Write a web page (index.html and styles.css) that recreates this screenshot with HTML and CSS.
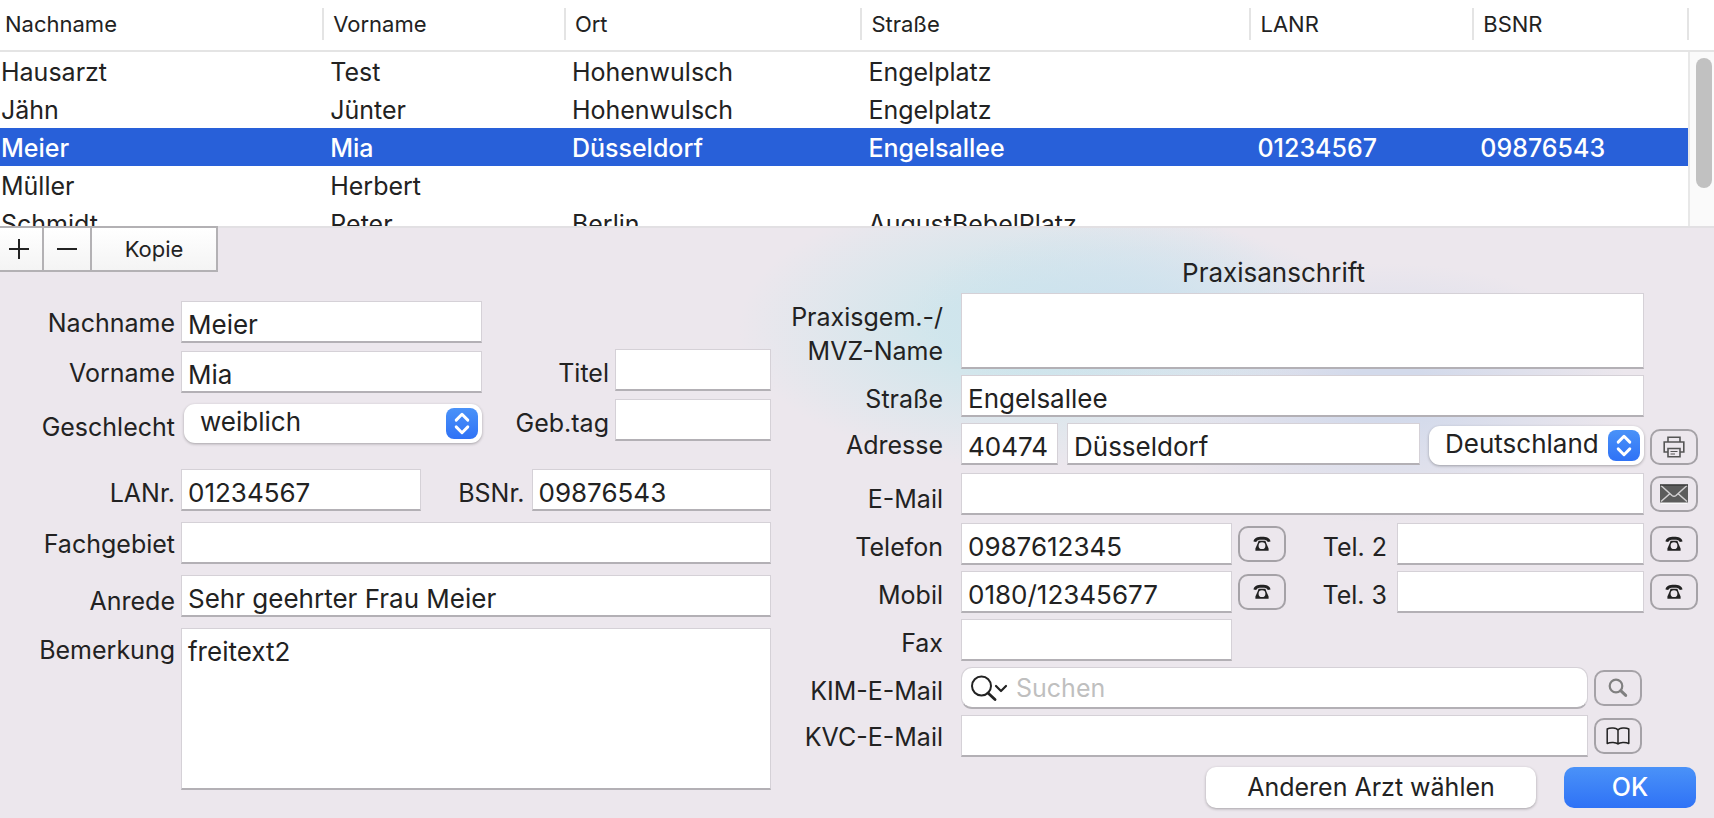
FILE: index.html
```html
<!DOCTYPE html>
<html lang="de">
<head>
<meta charset="utf-8">
<meta name="viewport" content="width=device-width, initial-scale=1">
<title>Ärzte</title>
<link rel="stylesheet" href="styles.css">
</head>
<body>
<svg class="sprite" aria-hidden="true">
  <symbol id="i-updown" viewBox="0 0 32 32"><path d="M10 12.500l6-6 6 6M10 19.500l6 6 6-6" fill="none" stroke="#fff" stroke-width="3" stroke-linecap="round" stroke-linejoin="round"/></symbol>
  <symbol id="i-phone" viewBox="0 0 18 16"><path d="M.5 5.400C1 2.200 4.400.8 9 .8s8 1.400 8.500 4.600l-2.800.6C14.300 4.300 12.600 3.700 9 3.700s-5.300.6-5.700 2.300z" fill="#222"/><path fill-rule="evenodd" d="M5.600 4.800h6.800l1 2.600 2.200 5v2.400H2.400v-2.400l2.200-5zM9 6.300a3.400 3.400 0 1 0 0 6.800 3.400 3.400 0 0 0 0-6.800z" fill="#222"/></symbol>
  <symbol id="i-print" viewBox="0 0 22 22"><g fill="none" stroke="#555" stroke-width="1.600"><path d="M5 6V1.200h12V6"/><path d="M5 16H1.200V6h19.600v10H17"/><path d="M5 12.500h12v8.300H5z"/><path d="M7.500 15.500h7M7.500 18h4.500" stroke-width="1.100"/></g></symbol>
  <symbol id="i-mail" viewBox="0 0 28 20"><path d="M1 18.500h26v1.200H1z" fill="#fff"/><path d="M0 .5h28v18H0z" fill="#5c5c5c"/><path d="M1 1.500l11 10q2 1.600 4 0l11-10M1 17.500l8.500-7.500M27 17.500l-8.500-7.500" fill="none" stroke="#d2d0d2" stroke-width="1.500"/><path d="M0 1h28" stroke="#333" stroke-width="1.200"/></symbol>
  <symbol id="i-find" viewBox="0 0 20 20"><circle cx="8" cy="8" r="6.300" fill="none" stroke="#808080" stroke-width="2.200"/><path d="M12.700 12.700l5 4.700" stroke="#808080" stroke-width="3" stroke-linecap="round"/></symbol>
  <symbol id="i-book" viewBox="0 0 24 18"><path d="M12 3C10.500.5 4 .3 1.200 2v14.500c3-1.500 9-1.300 10.800.5 1.800-1.800 7.800-2 10.800-.5V2C20 .3 13.500.5 12 3zM12 3v14" fill="none" stroke="#222" stroke-width="1.500" stroke-linejoin="round"/></symbol>
  <symbol id="i-search" viewBox="0 0 38 26"><g fill="none" stroke="#222" stroke-width="2" stroke-linecap="round" stroke-linejoin="round"><circle cx="11.500" cy="11" r="9.500"/><path d="M18 18l7 6.500" stroke-width="2.800"/><path d="M26 11l5 5 5-5" stroke-width="2.200"/></g></symbol>
</svg>

<section class="list">
  <table class="doctors">
    <colgroup><col class="c-last"><col class="c-first"><col class="c-town"><col class="c-street"><col class="c-lanr"><col class="c-bsnr"><col></colgroup>
    <thead>
      <tr><th><span>Nachname</span></th><th><span>Vorname</span></th><th><span>Ort</span></th><th><span>Straße</span></th><th><span>LANR</span></th><th><span>BSNR</span></th><th><span></span></th></tr>
    </thead>
    <tbody>
      <tr><td>Hausarzt</td><td>Test</td><td>Hohenwulsch</td><td>Engelplatz</td><td></td><td></td><td></td></tr>
      <tr><td>Jähn</td><td>Jünter</td><td>Hohenwulsch</td><td>Engelplatz</td><td></td><td></td><td></td></tr>
      <tr class="selected"><td>Meier</td><td>Mia</td><td>Düsseldorf</td><td>Engelsallee</td><td>01234567</td><td>09876543</td><td></td></tr>
      <tr><td>Müller</td><td>Herbert</td><td></td><td></td><td></td><td></td><td></td></tr>
      <tr><td>Schmidt</td><td>Peter</td><td>Berlin</td><td>AugustBebelPlatz</td><td></td><td></td><td></td></tr>
    </tbody>
  </table>
  <div class="scroll-track"><div class="scroll-thumb"></div></div>
</section>

<form class="editor">
  <div class="left">
    <div class="toolbar">
      <button type="button" class="tool tool-add" aria-label="Hinzufügen"><svg width="22" height="22" viewBox="0 0 22 22"><path d="M11 1v20M1 11h20" stroke="#222" stroke-width="2"/></svg></button>
      <button type="button" class="tool tool-remove" aria-label="Entfernen"><svg width="22" height="22" viewBox="0 0 22 22"><path d="M1 11h20" stroke="#222" stroke-width="2"/></svg></button>
      <button type="button" class="tool tool-copy">Kopie</button>
    </div>
    <div class="person">
      <div class="stack names">
        <div class="row"><label class="label high" for="nachname">Nachname</label><input class="field" id="nachname" value="Meier"></div>
        <div class="row"><label class="label high" for="vorname">Vorname</label><input class="field" id="vorname" value="Mia"></div>
        <div class="row"><label class="label low" for="geschlecht">Geschlecht</label>
          <div class="popup"><select id="geschlecht"><option>weiblich</option><option>männlich</option></select><svg class="updown"><use href="#i-updown"/></svg></div></div>
      </div>
      <div class="stack extras">
        <div class="row"><label class="label" for="titel">Titel</label><input class="field" id="titel"></div>
        <div class="row"><label class="label" for="gebtag">Geb.tag</label><input class="field" id="gebtag"></div>
      </div>
    </div>
    <div class="details">
      <div class="row numbers"><label class="label" for="lanr">LANr.</label><input class="field" id="lanr" value="01234567"><label class="label" for="bsnr">BSNr.</label><input class="field" id="bsnr" value="09876543"></div>
      <div class="row"><label class="label high" for="fach">Fachgebiet</label><input class="field" id="fach"></div>
      <div class="row"><label class="label low" for="anrede">Anrede</label><input class="field" id="anrede" value="Sehr geehrter Frau Meier"></div>
      <div class="row"><label class="label high" for="bemerkung">Bemerkung</label><textarea class="field remark" id="bemerkung">freitext2</textarea></div>
    </div>
  </div>

  <div class="right">
    <h2 class="heading">Praxisanschrift</h2>
    <div class="group">
      <div class="line"><label class="label two-line" for="praxis">Praxisgem.-/<br>MVZ-Name</label><textarea class="field practice" id="praxis"></textarea></div>
      <div class="line"><label class="label" for="strasse">Straße</label><input class="field" id="strasse" value="Engelsallee"></div>
      <div class="line"><label class="label high" for="plz">Adresse</label>
        <div class="address"><input class="field" id="plz" value="40474"><input class="field" aria-label="Ort" value="Düsseldorf">
          <div class="popup"><select aria-label="Land"><option>Deutschland</option></select><svg class="updown"><use href="#i-updown"/></svg></div></div>
        <button type="button" class="icon-btn drop" aria-label="Drucken"><svg width="22" height="22"><use href="#i-print"/></svg></button></div>
    </div>
    <div class="group">
      <div class="line"><label class="label low" for="email">E-Mail</label><input class="field" id="email"><button type="button" class="icon-btn" aria-label="E-Mail senden"><svg width="28" height="20"><use href="#i-mail"/></svg></button></div>
    </div>
    <div class="group">
      <div class="line phones"><label class="label" for="tel">Telefon</label><input class="field" id="tel" value="0987612345"><button type="button" class="icon-btn" aria-label="Telefon anrufen"><svg width="18" height="16"><use href="#i-phone"/></svg></button>
        <label class="label" for="tel2">Tel. 2</label><input class="field" id="tel2"><button type="button" class="icon-btn" aria-label="Tel. 2 anrufen"><svg width="18" height="16"><use href="#i-phone"/></svg></button></div>
      <div class="line phones"><label class="label" for="mobil">Mobil</label><input class="field" id="mobil" value="0180/12345677"><button type="button" class="icon-btn" aria-label="Mobil anrufen"><svg width="18" height="16"><use href="#i-phone"/></svg></button>
        <label class="label" for="tel3">Tel. 3</label><input class="field" id="tel3"><button type="button" class="icon-btn" aria-label="Tel. 3 anrufen"><svg width="18" height="16"><use href="#i-phone"/></svg></button></div>
      <div class="line phones"><label class="label" for="fax">Fax</label><input class="field" id="fax"></div>
      <div class="line short"><label class="label" for="kim">KIM-E-Mail</label>
        <div class="search"><svg width="38" height="26"><use href="#i-search"/></svg><input id="kim" placeholder="Suchen"></div>
        <button type="button" class="icon-btn" aria-label="KIM suchen"><svg width="20" height="20"><use href="#i-find"/></svg></button></div>
      <div class="line short"><label class="label high" for="kvc">KVC-E-Mail</label><input class="field" id="kvc"><button type="button" class="icon-btn" aria-label="Adressbuch"><svg width="24" height="18"><use href="#i-book"/></svg></button></div>
    </div>
    <div class="actions"><button type="button" class="action">Anderen Arzt wählen</button><button type="button" class="action primary">OK</button></div>
  </div>
</form>
</body>
</html>
```
FILE: styles.css
```css
* { box-sizing: border-box; }

body {
  margin: 0;
  min-height: 100vh;
  display: flex;
  flex-direction: column;
  font-family: Inter, "Liberation Sans", sans-serif;
  font-size: 25px;
  line-height: 34px;
  color: #222;
  background: #ece7ed;
}

input, select, textarea, button { font: inherit; color: inherit; margin: 0; }
.sprite { position: absolute; width: 0; height: 0; }

/* Doctor list */
.list { position: relative; height: 228px; flex: none; overflow: hidden; background: #fff; border-bottom: 2px solid #e2e0e3; }
.doctors { width: 100%; table-layout: fixed; border-collapse: separate; border-spacing: 0; }
.c-last { width: 18.800%; }
.c-first { width: 14.100%; }
.c-town { width: 17.300%; }
.c-street { width: 22.700%; }
.c-lanr { width: 13%; }
.c-bsnr { width: 12.500%; }
.doctors th { height: 52px; padding: 0 0 2px; font-size: 22px; font-weight: 400; text-align: left; border-bottom: 2px solid #e4e4e4; }
.doctors th span { display: block; height: 32px; line-height: 32px; padding-left: 9px; border-left: 2px solid #e4e4e4; }
.doctors th:first-child span { padding-left: 5px; border-left: 0; }
.doctors td { height: 38px; padding: 2px 0 0 8px; white-space: nowrap; }
.doctors td:first-child { padding-left: 1px; }
.doctors .selected { background: #2860d9; color: #fff; font-weight: 500; }
.scroll-track { position: absolute; top: 52px; right: 0; bottom: 0; width: 26px; padding: 6px 2px 0 6px; background: #fafafa; border-left: 2px solid #e8e8e8; }
.scroll-thumb { height: 130px; border-radius: 8px; background: #c1c1c1; }

/* Editor */
.editor {
  flex: 1;
  display: grid;
  grid-template-columns: minmax(0, 771fr) minmax(0, 943fr);
  background:
    radial-gradient(ellipse 220px 90px at 66% 14%, #cde1ee, rgba(205, 225, 238, 0)),
    radial-gradient(ellipse 290px 140px at 60% 17%, #d0e6ec 30%, rgba(208, 230, 236, 0)),
    radial-gradient(ellipse 240px 130px at 81% 28%, #d3daeb 20%, rgba(211, 218, 235, 0)),
    #ece7ed;
}

.toolbar { display: flex; width: 218px; height: 46px; margin-top: -2px; position: relative; border: 2px solid #b3b1b4; border-left: 0; background: linear-gradient(#fff, #f4f4f4); }
.tool { display: flex; align-items: center; justify-content: center; padding: 0; border: 0; background: none; font-size: 22px; }
.tool svg { display: block; }
.tool-add { width: 42px; padding-right: 4px; }
.tool-remove { width: 48px; border-left: 2px solid #b3b1b4; }
.tool-copy { flex: 1; border-left: 2px solid #b3b1b4; }

.person { display: flex; margin-top: 29px; }
.stack { display: flex; flex-direction: column; gap: 8px; }
.names { flex: 482; }
.extras { flex: 289; margin-top: 48px; }
.row { display: flex; gap: 6px; }
.row .label { flex: none; width: 175px; }
.extras .label { width: 127px; }
.details { display: grid; gap: 11px; margin-top: 26px; }
.numbers .label + .field + .label { width: 99px; padding-right: 1px; }

.label { line-height: 30px; text-align: right; padding-top: 9px; white-space: nowrap; }
.high { padding-top: 7px; }
.low { padding-top: 11px; }
.two-line { padding-top: 7px; line-height: 34px; }

.field { flex: 1; width: 100%; min-width: 0; height: 42px; padding: 5px 6px 0; font-size: 26px; background: #fff; border: 1px solid #d5d1d7; border-bottom: 2px solid #b3b0b5; border-radius: 0; outline: 0; resize: none; }
.remark { height: 162px; padding-top: 6px; }
.practice { height: 76px; }

.popup { position: relative; flex: 1; height: 39px; margin: 3px 0 0 3px; }
.popup select { appearance: none; width: 100%; height: 39px; padding: 0 44px 4px 16px; font-size: 26px; border: 0; border-radius: 11px; background: #fff; box-shadow: 0 1px 3px rgba(0, 0, 0, .3); outline: 0; }
.updown { position: absolute; top: 4px; right: 4px; width: 32px; height: 31px; border-radius: 8px; background: linear-gradient(#4a92f8, #2f72f6); pointer-events: none; }

.right { padding-right: 16px; }
.heading { margin: 28px 0 0 190px; padding: 0 112px 3px 0; font-size: 26px; line-height: 34px; font-weight: 400; text-align: center; }
.group { display: grid; gap: 6px; margin-bottom: 8px; }
.line { display: grid; grid-template-columns: 184px minmax(0, 1fr) 48px; column-gap: 6px; }
.line .label { padding-right: 12px; }
.phones { grid-template-columns: 184px minmax(0, 271fr) 48px 99px minmax(0, 247fr) 48px; }
.phones .icon-btn + .label { padding-right: 4px; }
.short { padding-right: 56px; }
.address { display: flex; gap: 9px; }
.address .field:first-child { flex: none; width: 97px; }
.address .popup { flex: none; width: 215px; margin-left: 0; }

.icon-btn { display: flex; align-items: center; justify-content: center; width: 48px; height: 36px; margin-top: 3px; padding: 0; border: 2px solid #a5a2a7; border-radius: 10px; background: none; }
.drop { margin-top: 6px; }

.search { display: flex; align-items: center; gap: 8px; height: 42px; padding: 0 8px; background: #fff; border: 1px solid #d5d1d7; border-bottom: 2px solid #b3b0b5; border-radius: 11px; }
.search input { flex: 1; min-width: 0; padding: 0; border: 0; outline: 0; background: none; }
.search input::placeholder { color: #bfbfbf; opacity: 1; }

.actions { display: flex; justify-content: flex-end; gap: 28px; margin-top: 10px; padding: 0 2px 10px 0; }
.action { width: 330px; height: 41px; padding: 0 0 2px; border: 0; border-radius: 10px; background: #fff; box-shadow: 0 1px 3px rgba(0, 0, 0, .3); }
.primary { width: 132px; color: #fff; font-weight: 500; background: linear-gradient(#4a92f8, #2f72f6); box-shadow: none; }
```
